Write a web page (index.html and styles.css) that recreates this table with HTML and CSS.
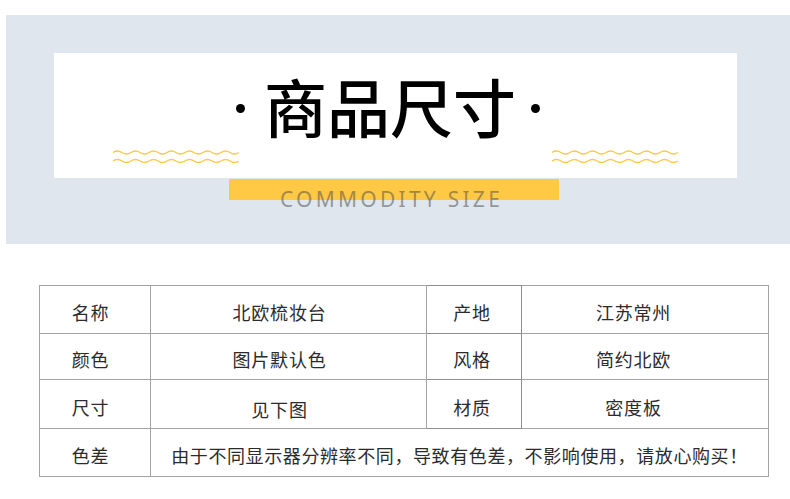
FILE: index.html
```html
<!DOCTYPE html>
<html lang="zh-CN">
<head>
<meta charset="utf-8">
<title>商品尺寸</title>
<link rel="stylesheet" href="styles.css">
</head>
<body>
<section class="banner">
  <div class="card">
    <svg class="wave" width="126" height="16" viewBox="0 0 126 16">
      <path d="M0,3.5 q4.5,-3 9,0 t9,0 t9,0 t9,0 t9,0 t9,0 t9,0 t9,0 t9,0 t9,0 t9,0 t9,0 t9,0 t9,0" />
      <path d="M0,12 q4.5,-3 9,0 t9,0 t9,0 t9,0 t9,0 t9,0 t9,0 t9,0 t9,0 t9,0 t9,0 t9,0 t9,0 t9,0" />
    </svg>
    <div class="title">
      <span class="dot"></span>
      <h1 class="title-text">商品尺寸</h1>
      <span class="dot dot-right"></span>
    </div>
    <svg class="wave wave-right" width="126" height="16" viewBox="0 0 126 16">
      <path d="M0,3.5 q4.5,-3 9,0 t9,0 t9,0 t9,0 t9,0 t9,0 t9,0 t9,0 t9,0 t9,0 t9,0 t9,0 t9,0 t9,0" />
      <path d="M0,12 q4.5,-3 9,0 t9,0 t9,0 t9,0 t9,0 t9,0 t9,0 t9,0 t9,0 t9,0 t9,0 t9,0 t9,0 t9,0" />
    </svg>
  </div>
  <div class="bar"></div>
  <p class="subtitle">COMMODITY SIZE</p>
</section>

<table class="spec">
  <tr class="r1">
    <td class="c1">名称</td>
    <td class="c2">北欧梳妆台</td>
    <td class="c3">产地</td>
    <td class="c4">江苏常州</td>
  </tr>
  <tr class="r2">
    <td class="c1">颜色</td>
    <td class="c2">图片默认色</td>
    <td class="c3">风格</td>
    <td class="c4">简约北欧</td>
  </tr>
  <tr class="r3">
    <td class="c1">尺寸</td>
    <td class="c2 low">见下图</td>
    <td class="c3">材质</td>
    <td class="c4">密度板</td>
  </tr>
  <tr class="r4">
    <td class="c1">色差</td>
    <td class="note" colspan="3">由于不同显示器分辨率不同，导致有色差，不影响使用，请放心购买！</td>
  </tr>
</table>
</body>
</html>
```

FILE: styles.css
```css
html, body {
  margin: 0;
  padding: 0;
  background: #ffffff;
}

body {
  width: 790px;
  height: 499px;
  overflow: hidden;
  font-family: "Noto Sans CJK SC", "Noto Sans", sans-serif;
}

.banner {
  margin: 15px 0 0 6px;
  width: 784px;
  height: 229px;
  background: #dfe6ee;
  padding-top: 38px;
  box-sizing: border-box;
}

.card {
  margin-left: 48px;
  width: 683px;
  height: 125px;
  background: #ffffff;
  display: flex;
  align-items: flex-start;
  padding-left: 59px;
  box-sizing: border-box;
}

.wave {
  display: block;
  flex: none;
  margin-top: 96px;
}

.wave path {
  fill: none;
  stroke: #ffc845;
  stroke-width: 1.3;
}

.wave-right {
  margin-left: 12px;
}

.title {
  display: flex;
  align-items: flex-start;
  margin-left: -3px;
  margin-top: 20px;
}

.dot {
  width: 9px;
  height: 9px;
  border-radius: 50%;
  background: #000;
  flex: none;
  margin-top: 31px;
  margin-right: 19px;
}

.dot-right {
  margin-right: 0;
  margin-left: 15px;
}

.title-text {
  margin: 0;
  font-size: 63px;
  line-height: 63px;
  font-weight: 500;
  color: #000;
  letter-spacing: 0;
}

.bar {
  margin: 1px 0 0 223px;
  width: 330px;
  height: 21px;
  background: #ffc845;
}

.subtitle {
  margin: -11px 0 0 0;
  padding-left: 274px;
  font-family: "Noto Sans", sans-serif;
  font-size: 21px;
  line-height: 21px;
  letter-spacing: 3.25px;
  color: rgba(70, 70, 70, 0.5);
  white-space: nowrap;
}

.spec {
  margin: 41px 0 0 39px;
  border-collapse: collapse;
  table-layout: fixed;
  width: 729px;
}

.spec td {
  border: 1px solid #a3a3a3;
  text-align: center;
  vertical-align: middle;
  padding: 5px 0 0 0;
  font-size: 18px;
  letter-spacing: 0.8px;
  color: #2b2b2b;
  line-height: 20px;
  box-sizing: border-box;
}

.spec .c1 { width: 111px; padding-right: 9px; }
.spec .c2 { width: 276px; padding-right: 18px; }
.spec .c3 { width: 95px; padding-right: 4px; border-color: #8e8e8e; }
.spec .c4 { width: 247px; padding-right: 23px; }

.spec .low { padding-top: 10px; }

.r1 td { height: 48px; }
.r2 td { height: 46px; }
.r3 td { height: 49px; }
.r4 td { height: 48px; }

.spec .note {
  letter-spacing: 0.6px;
  padding-right: 0;
}
```
